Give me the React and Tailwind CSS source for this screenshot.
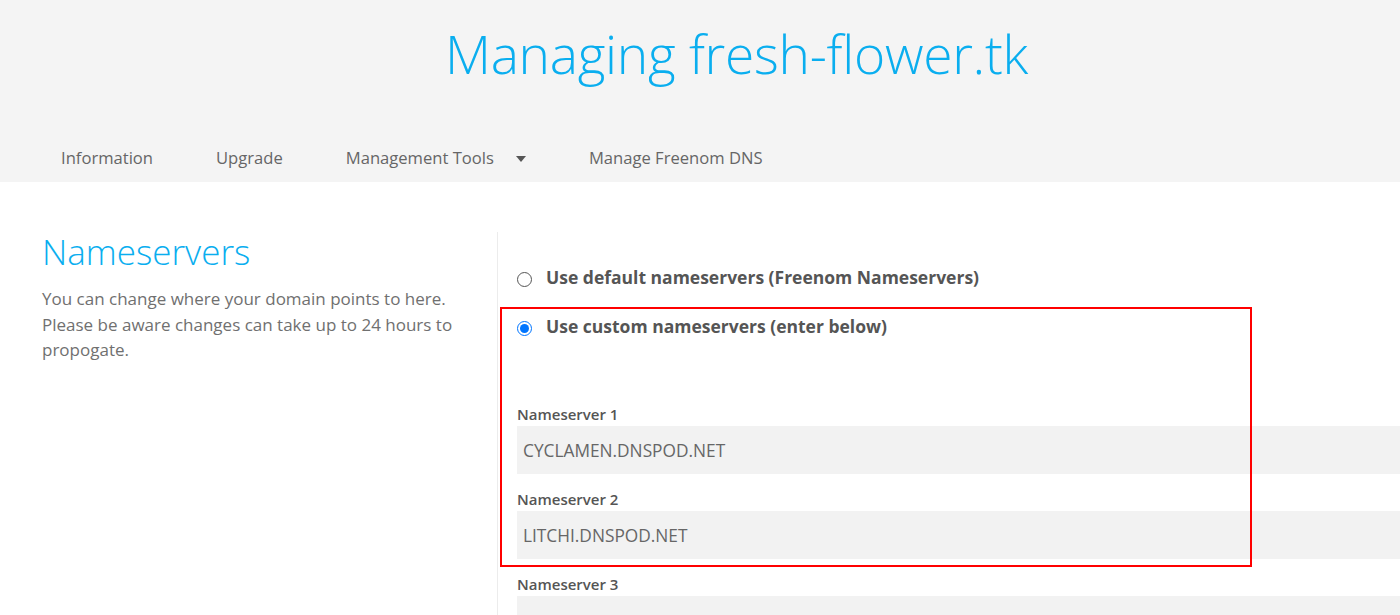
export default function App() {
  return (
    <div className="relative w-[1400px] h-[615px] overflow-hidden bg-white font-['Open_Sans',sans-serif]">
      <header className="bg-[#f4f4f4] h-[182px] flex flex-col">
        <h1 className="pt-[27px] pl-[73px] text-center text-[53.3px] leading-none font-light text-[#0aaeef] tracking-[-0.3px]">
          Managing fresh-flower.tk
        </h1>
        <nav className="mt-[66px] ml-[61px] flex items-center text-[16.6px] leading-[24px] text-[#666]">
          <span>Information</span>
          <span className="ml-[63px]">Upgrade</span>
          <span className="ml-[63px] flex items-center">
            Management Tools
            <svg className="ml-[22px] mt-[2px]" width="10" height="6" viewBox="0 0 10 6">
              <path d="M0 0 L10 0 L5 6 Z" fill="#555" />
            </svg>
          </span>
          <span className="ml-[63px]">Manage Freenom DNS</span>
        </nav>
      </header>

      <div className="flex">
        <section className="w-[497px] shrink-0 pl-[42px] pr-[30px] pt-[50px]">
          <h2 className="text-[35px] leading-[40px] font-light text-[#0aaeef]">Nameservers</h2>
          <p className="mt-[14px] text-[17px] leading-[25.5px] text-[#707070] w-[420px]">
            You can change where your domain points to here. Please be aware changes can take up to 24 hours to propogate.
          </p>
        </section>
        <section className="mt-[50px] border-l border-[#ececec] pl-[19px] w-[1000px] shrink-0">
          <div className="pt-[32px] flex items-start">
            <span className="mt-[8px] w-[15px] h-[15px] rounded-full border border-[#555] bg-white shrink-0" />
            <span className="ml-[14px] text-[17.5px] leading-[26px] font-bold text-[#555]">
              Use default nameservers (Freenom Nameservers)
            </span>
          </div>
          <div className="mt-[23px] flex items-start">
            <span className="mt-[8px] w-[15px] h-[15px] rounded-full border border-[#0075ff] flex items-center justify-center shrink-0">
              <span className="w-[9px] h-[9px] rounded-full bg-[#0075ff]" />
            </span>
            <span className="ml-[14px] text-[17.5px] leading-[26px] font-bold text-[#555]">
              Use custom nameservers (enter below)
            </span>
          </div>
          <div className="mt-[65px]">
            <div className="text-[15px] leading-[20px] font-semibold text-[#555]">Nameserver 1</div>
            <div className="mt-[2px] h-[48px] bg-[#f2f2f2] pl-[6px] pt-px flex items-center text-[17.3px] text-[#666]">
              CYCLAMEN.DNSPOD.NET
            </div>
            <div className="mt-[15px] text-[15px] leading-[20px] font-semibold text-[#555]">Nameserver 2</div>
            <div className="mt-[2px] h-[48px] bg-[#f2f2f2] pl-[6px] pt-px flex items-center text-[17.3px] text-[#666]">
              LITCHI.DNSPOD.NET
            </div>
            <div className="mt-[15px] text-[15px] leading-[20px] font-semibold text-[#555]">Nameserver 3</div>
            <div className="mt-[2px] h-[48px] bg-[#f2f2f2]" />
          </div>
        </section>
      </div>

      <div className="absolute left-[500px] top-[307px] w-[752px] h-[260px] border-2 border-[#ff0000] pointer-events-none" />
    </div>
  );
}
